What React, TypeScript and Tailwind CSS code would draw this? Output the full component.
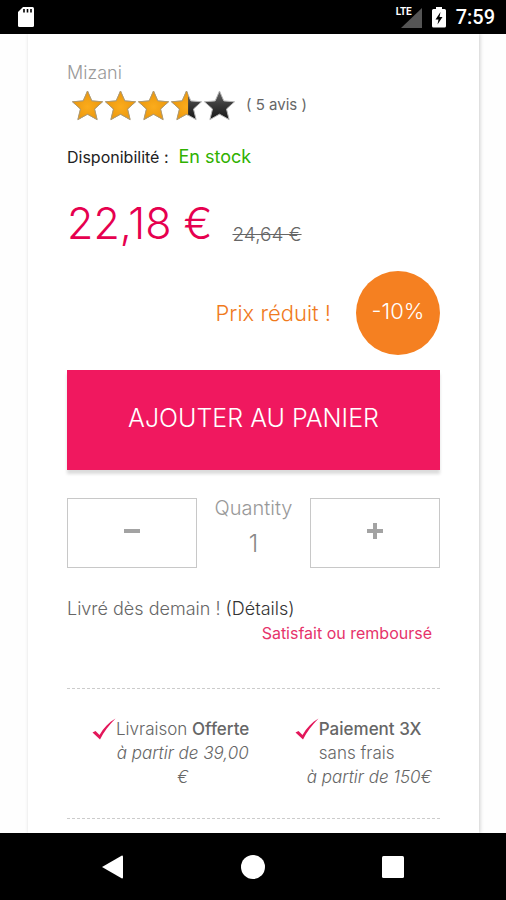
import { useState } from "react";

const STAR = "M16 1 L20.3 10.9 L31 11.8 L23 19 L25.6 29.6 L16 24.2 L6.4 29.6 L9 19 L1 11.8 L11.7 10.9 Z";

const Star = ({ fill, id }: { fill: number; id: string }) => (
  <svg viewBox="0 0 32 31" className="h-[31px] w-[33px]" aria-hidden="true">
    <defs>
      <linearGradient id={`${id}-dark`} x1="0" y1="0" x2="0" y2="1">
        <stop offset="0" stopColor="#666" />
        <stop offset="0.45" stopColor="#3c3c3c" />
        <stop offset="1" stopColor="#161616" />
      </linearGradient>
      <radialGradient id={`${id}-gold`} cx="0.5" cy="0.55" r="0.5">
        <stop offset="0" stopColor="#fbac1c" />
        <stop offset="1" stopColor="#ec980e" />
      </radialGradient>
      <clipPath id={`${id}-clip`}>
        <rect x="0" y="0" width={32 * fill} height="31" />
      </clipPath>
    </defs>
    <path d={STAR} fill={`url(#${id}-dark)`} stroke="#b5b5b5" strokeWidth="1" strokeLinejoin="round" />
    {fill > 0 && (
      <path
        d={STAR}
        fill={`url(#${id}-gold)`}
        stroke="#b39a6a"
        strokeWidth="1"
        strokeLinejoin="round"
        clipPath={`url(#${id}-clip)`}
      />
    )}
  </svg>
);

const Check = () => (
  <svg viewBox="0 0 24 24" className="h-6 w-6 shrink-0" aria-hidden="true">
    <path d="M0.5 15.5 L3.5 14 L7.5 18 C11.5 11 16.5 5.5 23.5 1.5 C17 8 12 14.5 8 22.5 Z" fill="#e3175a" />
  </svg>
);

const StatusBar = () => (
  <header className="flex h-[34px] items-center justify-between bg-black pl-[17px] pr-[11px] text-white">
    <svg viewBox="0 0 18 22" className="h-[22px] w-[18px]" aria-hidden="true">
      <path d="M6 1 H15.5 Q17 1 17 2.5 V19.5 Q17 21 15.5 21 H2.5 Q1 21 1 19.5 V6 Z" fill="#fff" />
      <path d="M7 3 V6.5 M10.5 3 V6.5 M14 3 V6.5" stroke="#000" strokeWidth="1.6" />
    </svg>
    <div className="flex items-center">
      <div className="relative mr-2.5 h-[22px] w-7">
        <svg viewBox="0 0 28 22" className="h-[22px] w-7" aria-hidden="true">
          <path d="M28 2 V22 H7 Z" fill="#555" />
        </svg>
        <span className="absolute left-0.5 top-0 font-['Roboto'] text-[10px] font-bold leading-3">LTE</span>
      </div>
      <svg viewBox="0 0 14 22" className="mr-2.5 h-[22px] w-3.5" aria-hidden="true">
        <path d="M4 1 H10 V3 H12.5 Q14 3 14 4.5 V20 Q14 21.5 12.5 21.5 H1.5 Q0 21.5 0 20 V4.5 Q0 3 1.5 3 H4 Z" fill="#fff" />
        <path d="M8.5 6 L3.5 13.5 H6.5 L5.5 18.5 L10.5 11 H7.5 Z" fill="#000" />
      </svg>
      <span className="font-['Roboto'] text-xl font-medium leading-6">7:59</span>
    </div>
  </header>
);

const NavBar = () => (
  <footer className="flex h-[67px] items-center justify-center gap-[116px] bg-black">
    <button aria-label="Back">
      <svg viewBox="0 0 24 24" className="h-6 w-6">
        <path d="M1 12 L21 0.5 Q22 0.5 22 1.5 V22.5 Q22 23.5 21 23.5 Z" fill="#fff" />
      </svg>
    </button>
    <button aria-label="Home">
      <svg viewBox="0 0 24 24" className="h-6 w-6">
        <circle cx="12" cy="12" r="12" fill="#fff" />
      </svg>
    </button>
    <button aria-label="Recent apps">
      <svg viewBox="0 0 24 24" className="h-6 w-6">
        <rect x="1" y="1" width="22" height="22" rx="1.5" fill="#fff" />
      </svg>
    </button>
  </footer>
);

export default function App() {
  const [quantity, setQuantity] = useState(1);

  return (
    <div className="flex min-h-screen flex-col bg-[#fefefe] font-['Inter',sans-serif] font-light text-[#666]">
      <StatusBar />
      <main className="ml-7 mr-[27px] flex-1 bg-white px-[39px] pt-[27px] pb-3.5 shadow-[1px_0_4px_rgba(0,0,0,0.2)] [clip-path:inset(0_-6px)]">
        <p className="text-lg leading-6 text-[#999]">Mizani</p>

        <div className="flex h-10 items-center gap-2.5">
          <div className="flex pl-1" role="img" aria-label="3,5 / 5">
            <Star id="s1" fill={1} />
            <Star id="s2" fill={1} />
            <Star id="s3" fill={1} />
            <Star id="s4" fill={0.55} />
            <Star id="s5" fill={0} />
          </div>
          <span className="text-[15px] leading-6 font-normal">( 5 avis )</span>
        </div>

        <p className="mt-5 flex items-center gap-2.5">
          <span className="text-base leading-6 font-normal text-[#222]">Disponibilité :</span>
          <span className="text-lg leading-6 font-normal text-[#2fb100]">En stock</span>
        </p>

        <p className="mt-[30px] flex items-end gap-5">
          <span className="text-[43px] leading-[48px] text-[#e6004f]">22,18 €</span>
          <del className="text-[19px] leading-6">24,64 €</del>
        </p>

        <div className="mt-6 flex items-center justify-end gap-[25px]">
          <span className="text-[22px] text-[#f07a1d]">Prix réduit !</span>
          <span className="flex h-21 w-21 items-center justify-center rounded-full bg-[#f58021] pb-1 text-[22px] text-white">
            -10%
          </span>
        </div>

        <button className="mt-[15px] h-25 w-full bg-[#f0185f] pb-0.5 text-[25px] text-white shadow-[0_4px_3px_rgba(0,0,0,0.14)]">
          AJOUTER AU PANIER
        </button>

        <div className="mt-7 flex h-[70px]">
          <button
            aria-label="Moins"
            onClick={() => setQuantity(Math.max(1, quantity - 1))}
            className="flex w-[130px] items-center justify-center border border-[#c8c8c8] pb-1"
          >
            <svg viewBox="0 0 16 16" className="h-4 w-4">
              <path d="M0 6 H16 V10 H0 Z" fill="#a3a3a3" />
            </svg>
          </button>
          <div className="flex min-w-0 flex-1 flex-col items-center">
            <label htmlFor="quantity" className="text-xl leading-5 text-[#999]">
              Quantity
            </label>
            <input
              id="quantity"
              value={quantity}
              onChange={(e) => setQuantity(Number(e.target.value) || 1)}
              className="h-[50px] w-20 text-center text-2xl text-[#888]"
            />
          </div>
          <button
            aria-label="Plus"
            onClick={() => setQuantity(quantity + 1)}
            className="flex w-[130px] items-center justify-center border border-[#c8c8c8] pb-1"
          >
            <svg viewBox="0 0 16 16" className="h-4 w-4">
              <path d="M0 6 H6 V0 H10 V6 H16 V10 H10 V16 H6 V10 H0 Z" fill="#a3a3a3" />
            </svg>
          </button>
        </div>

        <p className="mt-[29px] text-lg leading-6">
          Livré dès demain !{" "}
          <a href="#details" className="text-[#333]">
            (Détails)
          </a>
        </p>
        <p className="pr-2 text-right text-base leading-6 font-normal text-[#e6336b]">Satisfait ou remboursé</p>

        <ul className="mt-[43px] flex justify-between border-y border-dashed border-[#ccc] pt-7 pb-[29px] text-[17px] leading-6">
          <li className="flex pl-[25px]">
            <Check />
            <p className="text-center whitespace-nowrap">
              Livraison <strong className="font-medium">Offerte</strong>
              <br />
              <em>à partir de 39,00</em>
              <br />
              <em>€</em>
            </p>
          </li>
          <li className="pr-2">
            <div className="flex">
              <Check />
              <p className="whitespace-nowrap">
                <strong className="font-medium">Paiement 3X</strong>
                <br />
                sans frais
              </p>
            </div>
            <em className="block pl-3">à partir de 150€</em>
          </li>
        </ul>
      </main>
      <NavBar />
    </div>
  );
}
